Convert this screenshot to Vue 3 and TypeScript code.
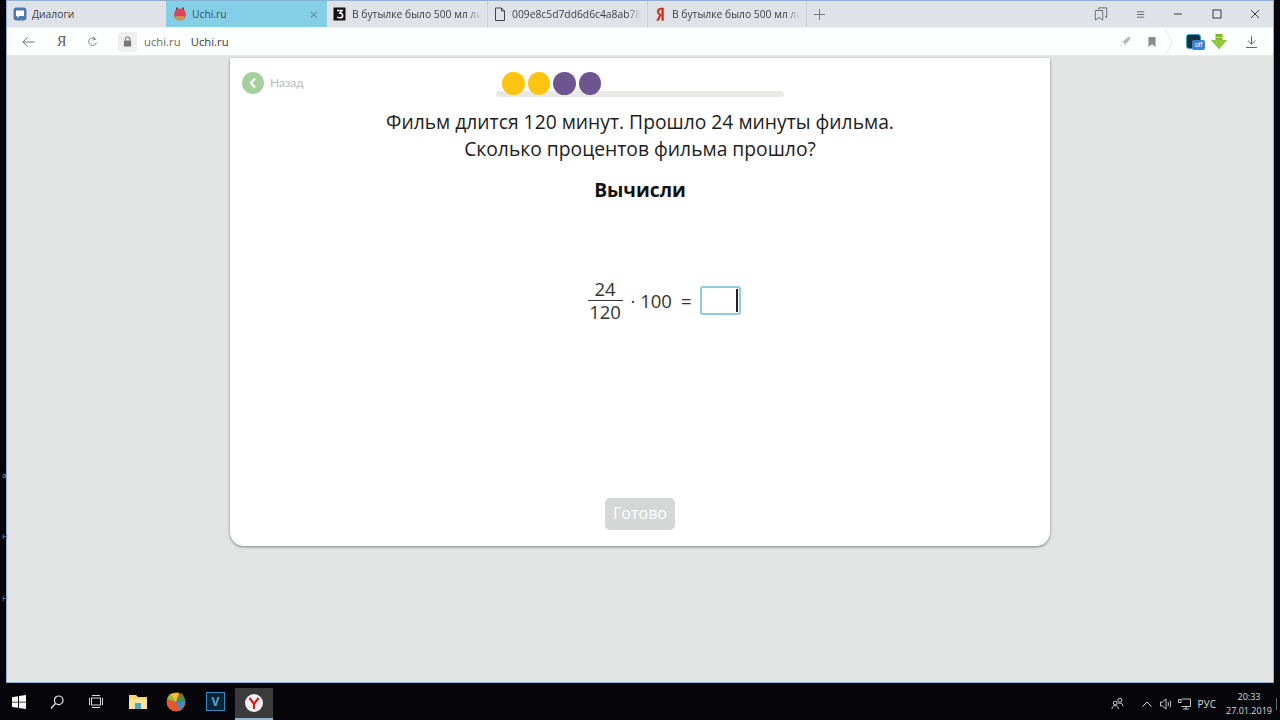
<script setup lang="ts">
interface Tab { title: string; icon: string; active?: boolean; fade?: boolean }
const tabs: Tab[] = [
  { title: 'Диалоги', icon: 'vk' },
  { title: 'Uchi.ru', icon: 'uchi', active: true },
  { title: 'В бутылке было 500 мл ли', icon: 'three', fade: true },
  { title: '009e8c5d7dd6d6c4a8ab787', icon: 'doc', fade: true },
  { title: 'В бутылке было 500 мл ли', icon: 'ya', fade: true },
]
const dots = ['#ffc312', '#ffc312', '#6d5590', '#6d5590']
</script>

<template>
  <div class="screen">
    <div class="window">
      <div class="tabbar">
        <div v-for="t in tabs" :key="t.icon" class="tab" :class="{ active: t.active }">
          <svg v-if="t.icon === 'vk'" class="favicon" viewBox="0 0 14 14"><rect x="0.5" y="0.5" width="13" height="13" rx="3" fill="#4f79ab" /><path d="M3 3.500h8v5.500H6.500L4.500 11V9H3z" fill="#fff" /></svg>
          <svg v-else-if="t.icon === 'uchi'" class="favicon" viewBox="0 0 14 14"><rect x="3" y="0.5" width="2" height="3" fill="#6a4a55" /><rect x="9" y="0.5" width="2" height="3" fill="#6a4a55" /><circle cx="7" cy="7.500" r="6" fill="#d8465d" /><path d="M2 9h10l-2 4H4z" fill="#c9944f" /></svg>
          <svg v-else-if="t.icon === 'three'" class="favicon" viewBox="0 0 14 14"><rect x="0.5" y="0.5" width="12" height="13" fill="#111" /><path d="M4 3.500h5L7 6.200c2 0 2.600 1 2.600 2.200 0 1.600-1.200 2.400-2.700 2.400-1 0-2-.3-2.600-.8" fill="none" stroke="#fff" stroke-width="1.600" /></svg>
          <svg v-else-if="t.icon === 'doc'" class="favicon" viewBox="0 0 14 14"><path d="M2.500 1h6l3 3v9.500h-9z M8.500 1v3h3" fill="none" stroke="#444" stroke-width="1" /></svg>
          <svg v-else class="favicon" viewBox="0 0 14 14"><path d="M10.500 13.500V1H8C5.500 1 4.200 2.400 4.200 4.600c0 1.800.8 2.800 2.200 3.600L3.600 13.500h1.900l2.600-5h.7v5zM8.800 7.200H8.200C6.800 7.200 6 6.200 6 4.600S6.800 2.400 8.200 2.400h.6z" fill="#cf2a1e" stroke="#cf2a1e" stroke-width="0.5" /></svg>
          <span class="tab-title" :class="{ fade: t.fade }">{{ t.title }}</span>
          <span v-if="t.active" class="tab-close">×</span>
        </div>
        <svg class="newtab" viewBox="0 0 12 12"><path d="M6 0v12M0 6h12" stroke="#6b7177" stroke-width="1" /></svg>
        <div class="winctl">
          <svg class="ctl" viewBox="0 0 16 16"><path d="M5.500 3V1h9v11l-2-1.500M1.500 4h8.500v11l-4.200-3-4.300 3z" fill="none" stroke="#5c6268" stroke-width="1" /></svg>
          <svg class="ctl menu" viewBox="0 0 10 10"><path d="M1 2h8M1 5h8M1 8h8" stroke="#5c6268" stroke-width="1" /></svg>
          <svg class="ctl min" viewBox="0 0 10 10"><path d="M1 5h8" stroke="#3a3e42" stroke-width="1" /></svg>
          <svg class="ctl max" viewBox="0 0 10 10"><rect x="1" y="1" width="8" height="8" fill="none" stroke="#3a3e42" stroke-width="1" /></svg>
          <svg class="ctl close" viewBox="0 0 10 10"><path d="M1 1l8 8M9 1l-8 8" stroke="#3a3e42" stroke-width="1" /></svg>
        </div>
      </div>

      <div class="toolbar">
        <svg class="tool back" viewBox="0 0 14 12"><path d="M13.500 6H1M6 1L1 6l5 5" fill="none" stroke="#666" stroke-width="1" /></svg>
        <span class="ya-btn">Я</span>
        <svg class="tool reload" viewBox="0 0 12 12"><path d="M9.800 4.200A4.200 4.200 0 1 0 10.200 7M7 .8l1.800 2.700-2.800 1" fill="none" stroke="#777" stroke-width="1" /></svg>
        <div class="urlbox">
          <span class="lock-box">
            <svg class="lock" viewBox="0 0 10 12"><path d="M2.500 5V3.500a2.500 2.500 0 0 1 5 0V5" fill="none" stroke="#777" stroke-width="1.200" /><rect x="1" y="5" width="8" height="6.500" rx="0.800" fill="#777" /></svg>
          </span>
          <span class="domain">uchi.ru</span>
          <span class="pagename">Uchi.ru</span>
          <svg class="tool rocket" viewBox="0 0 12 12"><path d="M11 1C7.500 1.500 5 4 3.800 7l1.500 1.500C8 7 10.500 4.500 11 1zM1 11l2-1M3.500 6l-2 .5M6 8.500 5.500 10.500" fill="#b5b8ba" stroke="#b5b8ba" stroke-width="0.800" /></svg>
          <svg class="tool bookmark" viewBox="0 0 9 11"><path d="M0.500 0h8v11L4.500 8l-4 3z" fill="#8a8d90" /></svg>
        </div>
        <svg class="url-end" viewBox="0 0 10 30"><path d="M0 0l8 15-8 15" fill="#fff" stroke="#e6e8ea" stroke-width="1" /></svg>
        <div class="ext">
          <span class="ext-black"></span>
          <span class="ext-off">off</span>
        </div>
        <svg class="tool arrow-ext" viewBox="0 0 16 15"><path d="M4.500 0h7v3h-7zM4.500 3.500h7v2.500H16L8 15 0 6h4.500z" fill="#7cb82c" /><path d="M0 6h16L8 15z" fill="#92c83e" /></svg>
        <svg class="tool dl" viewBox="0 0 11 12"><path d="M5.500 0v8M1.800 4.500l3.700 3.700 3.700-3.700M0 11.500h11" fill="none" stroke="#666" stroke-width="1" /></svg>
      </div>

      <div class="page">
        <div class="card">
          <div class="card-head">
            <div class="back-link">
              <span class="back-circle">
                <svg viewBox="0 0 10 12"><path d="M7 1.500 2.800 6 7 10.500" fill="none" stroke="#fff" stroke-width="2.200" /></svg>
              </span>
              <span class="back-text">Назад</span>
            </div>
            <div class="progress">
              <div class="dots">
                <span v-for="(c, i) in dots" :key="i" class="dot" :style="{ background: c }"></span>
              </div>
            </div>
          </div>
          <p class="question">Фильм длится 120 минут. Прошло 24 минуты фильма.<br />Сколько процентов фильма прошло?</p>
          <p class="task">Вычисли</p>
          <div class="expr">
            <div class="frac"><span>24</span><span class="den">120</span></div>
            <span class="times">· 100</span>
            <span class="eq">=</span>
            <div class="answer"><span class="caret"></span></div>
          </div>
          <button class="done" type="button">Готово</button>
        </div>
      </div>
    </div>

    <div class="edge-marks"><span>a</span><span>Н</span><span>Н</span></div>

    <div class="taskbar">
      <svg class="tb start" viewBox="0 0 14 14"><path d="M0 2.200 6 1.300V6.700H0zM7 1.100 14 0V6.700H7zM0 7.500h6v5.300l-6-.9zM7 7.500h7V14l-7-1z" fill="#fff" /></svg>
      <svg class="tb search" viewBox="0 0 14 14"><circle cx="8.700" cy="5.300" r="4.300" fill="none" stroke="#e8e8e8" stroke-width="1.200" /><path d="M5.500 8.500 1 13.500" stroke="#e8e8e8" stroke-width="1.200" /></svg>
      <svg class="tb tasks" viewBox="0 0 14 13"><path d="M3 .5h8M3 12.500h8" stroke="#ddd" stroke-width="1" /><rect x="2.500" y="3" width="9" height="7" fill="none" stroke="#ddd" stroke-width="1" /><path d="M.5 3v7M13.500 3v7" stroke="#ddd" stroke-width="1" /></svg>
      <svg class="tb folder" viewBox="0 0 18 15"><path d="M0 1h7l2 2h9v12H0z" fill="#f5d577" /><rect x="0" y="5" width="18" height="10" fill="#f9e39b" /><rect x="6" y="9" width="6" height="6" fill="#4fa8c0" /></svg>
      <svg class="tb ball" viewBox="0 0 20 20"><circle cx="10" cy="10" r="9.500" fill="#e4572e" /><path d="M10 10 16 .5 19.500 10z" fill="#3e8e5a" /><path d="M10 10 19.500 10 14 19z" fill="#3a8ec4" /><path d="M10 10 4 2 13 .5z" fill="#f2c230" /><path d="M10 10 1 7l3-5z" fill="#8fbf3a" /></svg>
      <div class="tb v-box">V</div>
      <div class="tb yandex">
        <svg viewBox="0 0 18 18"><circle cx="9" cy="9" r="9" fill="#f5f0f0" /><path d="M4.500 4 9 10l4.500-6M9 10v5" fill="none" stroke="#d32027" stroke-width="2.200" /></svg>
      </div>
      <div class="tray">
        <svg class="tr people" viewBox="0 0 14 14"><circle cx="9.500" cy="3.500" r="2.200" fill="none" stroke="#ddd" /><circle cx="4.500" cy="6.500" r="2" fill="none" stroke="#ddd" /><path d="M1 13c.3-2.500 1.500-3.800 3.500-3.800S7.700 10.500 8 13M7 7.500c.8-.7 1.500-1 2.500-1 2 0 3.200 1.300 3.500 3.500" fill="none" stroke="#ddd" /></svg>
        <svg class="tr chev" viewBox="0 0 10 6"><path d="M.5 5.500 5 1l4.500 4.500" fill="none" stroke="#ddd" stroke-width="1" /></svg>
        <svg class="tr vol" viewBox="0 0 13 12"><path d="M.5 4h2L6 1v10L2.500 8h-2zM8 4c.6 1.200.6 2.800 0 4M10 2.500c1 2 1 5 0 7" fill="none" stroke="#ddd" stroke-width="0.900" /></svg>
        <svg class="tr net" viewBox="0 0 13 12"><path d="M3 1.500H.5v3H3zM3.500 1h9v7.500h-9M8 8.500v2.500M5 11h6" fill="none" stroke="#ddd" stroke-width="0.900" /></svg>
        <span class="lang">РУС</span>
        <div class="clock"><span>20:33</span><span>27.01.2019</span></div>
        <span class="notify-line"></span>
      </div>
    </div>
  </div>
</template>

<style>
html, body { margin: 0; background: #03030a; }
</style>

<style scoped>
.screen {
  position: relative;
  width: 1280px;
  height: 720px;
  overflow: hidden;
  background: #050509;
  font-family: "Open Sans", "Noto Sans", sans-serif;
  display: flex;
  flex-direction: column;
}
.window {
  margin: 0 6px;
  height: 683px;
  box-sizing: border-box;
  border: 1px solid #8fb0d6;
  display: flex;
  flex-direction: column;
  background: #e3e5e5;
}
.tabbar {
  height: 26px;
  background: #dfe3e8;
  display: flex;
  align-items: center;
  flex: none;
}
.tab {
  width: 160px;
  height: 26px;
  box-sizing: border-box;
  padding-left: 6px;
  display: flex;
  align-items: center;
  gap: 5px;
  color: #3b3f44;
  flex: none;
}
.tab:nth-child(1) { width: 159px; }
.tab:nth-child(4), .tab:nth-child(5) { border-left: 1px solid #cbd0d5; padding-left: 5px; }
.tab:nth-child(5) { border-right: 1px solid #cbd0d5; }
.tab.active { background: #85cfe6; width: 161px; padding-left: 7px; color: #34505e; }
.favicon { width: 14px; height: 14px; flex: none; }
.tab-title {
  white-space: nowrap;
  overflow: hidden;
  flex: 1;
  min-width: 0;
  margin-right: 1px;
  font-size: 10.300px;
}
.tab-title.fade {
  -webkit-mask-image: linear-gradient(to right, #000 86%, transparent 96%);
  mask-image: linear-gradient(to right, #000 86%, transparent 96%);
}
.tab-close { font-size: 15px; color: #5d8a9c; margin-right: 9px; line-height: 1; }
.newtab { width: 11px; height: 11px; margin-left: 7px; flex: none; }
.winctl { margin-left: auto; display: flex; align-items: center; }
.ctl { flex: none; display: block; }
.winctl .ctl { width: 14px; height: 14px; margin-right: 27.500px; }
.winctl .menu { width: 9px; height: 9px; margin-right: 28.500px; }
.winctl .min { width: 10px; height: 10px; margin-right: 29px; }
.winctl .max { width: 10px; height: 10px; margin-right: 28px; }
.winctl .close { width: 10px; height: 10px; margin-right: 13px; }

.toolbar {
  height: 29px;
  flex: none;
  background: #fdfefe;
  display: flex;
  align-items: center;
  box-sizing: border-box;
  padding-left: 15px;
  border-bottom: 1px solid #e9ebeb;
  border-top: 1px solid #f0f2f4;
}
.tool { display: block; flex: none; }
.back { width: 13px; height: 12px; }
.ya-btn { width: 10px; margin-left: 22px; font-size: 14px; color: #555; font-family: "Liberation Serif", serif; line-height: 1; }
.reload { width: 11px; height: 11px; margin-left: 20px; }
.urlbox {
  margin-left: 20px;
  display: flex;
  align-items: center;
  flex: 1;
  height: 100%;
  font-size: 11.300px;
}
.lock-box {
  width: 19px;
  height: 20px;
  background: #efefef;
  border-radius: 3px;
  display: flex;
  align-items: center;
  justify-content: center;
  flex: none;
}
.lock { width: 9px; height: 11px; }
.domain { margin-left: 7px; color: #6f6a5e; }
.pagename { margin-left: 10px; color: #34383c; }
.rocket { width: 11px; height: 11px; margin-left: auto; }
.bookmark { width: 8px; height: 10px; margin-left: 17px; margin-right: 9px; }
.url-end { width: 9px; height: 28px; flex: none; }
.ext { width: 19px; height: 16px; margin-left: 12px; position: relative; flex: none; }
.ext-black { position: absolute; left: 0; top: 0; width: 15px; height: 15px; border-radius: 3px; background: #173040; border: 1px solid #39a5c8; box-sizing: border-box; }
.ext-off {
  position: absolute; left: 6px; top: 6px; width: 13px; height: 10px;
  background: #3f7fd0; border-radius: 2px; color: #fff; font-size: 7px; line-height: 10px; text-align: center;
  font-family: "Liberation Sans", sans-serif;
}
.arrow-ext { width: 16px; height: 15px; margin-left: 6px; }
.dl { width: 11px; height: 12px; margin-left: 19px; margin-right: 16px; }

.page {
  flex: 1;
  min-height: 0;
  background: #e3e5e5;
  padding-top: 2px;
  display: flex;
  justify-content: center;
}
.card {
  width: 820px;
  height: 488px;
  background: #fff;
  border-radius: 0 0 14px 14px;
  box-shadow: 0 1px 3px rgba(0, 0, 0, 0.45);
  display: flex;
  flex-direction: column;
  align-items: center;
  box-sizing: border-box;
  padding-top: 14px;
}
.card-head {
  width: 100%;
  height: 26px;
  position: relative;
  flex: none;
  box-sizing: border-box;
  padding-left: 12px;
  display: flex;
  align-items: flex-start;
}
.back-link { display: flex; align-items: center; gap: 6px; }
.back-circle {
  width: 22px; height: 22px; border-radius: 50%;
  background: #a4cf9f;
  display: flex; align-items: center; justify-content: center;
}
.back-circle svg { width: 10px; height: 12px; }
.back-text { font-family: Lato, sans-serif; font-size: 12px; color: #b9bbbb; padding-bottom: 2px; }
.progress {
  position: absolute;
  left: 266px;
  top: 19px;
  width: 288px;
  height: 6px;
  border-radius: 3px;
  background: #e7e9e2;
}
.dots {
  position: absolute;
  left: 6px;
  top: -19px;
  display: flex;
  gap: 3px;
}
.dot { width: 22.500px; height: 23px; border-radius: 50%; }
.question {
  margin: 10px 0 0;
  font-size: 19.300px;
  line-height: 27px;
  color: #1d1d1d;
  text-align: center;
}
.task {
  margin: 14px 0 0;
  font-size: 19.200px;
  line-height: 27px;
  font-weight: 700;
  color: #111;
}
.expr {
  margin-top: 74px;
  margin-left: 49px;
  height: 46px;
  display: flex;
  align-items: center;
  font-size: 18.500px;
  color: #333;
}
.frac {
  display: flex;
  flex-direction: column;
  align-items: center;
  width: 35px;
  line-height: 22px;
}
.frac .den { border-top: 1.500px solid #333; width: 100%; text-align: center; }
.times { margin-left: 8px; }
.eq { margin-left: 9px; }
.answer {
  margin-left: 9px;
  width: 41px;
  height: 29px;
  box-sizing: border-box;
  border: 2px solid #8ccbe0;
  border-radius: 3px;
  display: flex;
  justify-content: flex-end;
  align-items: center;
  padding-right: 1px;
}
.caret { width: 2px; height: 23px; background: #222; }
.done {
  margin-top: auto;
  margin-bottom: 16px;
  width: 70px;
  height: 32px;
  border: 0;
  border-radius: 5px;
  background: #d5d6d6;
  color: #fff;
  font-family: "Open Sans", sans-serif;
  font-size: 16px;
  padding: 0 0 2px;
}
.edge-marks { display: contents; }
.edge-marks span {
  position: absolute;
  left: 2px;
  font-size: 8px;
  color: #99a;
  line-height: 10px;
}
.edge-marks span:nth-child(1) { top: 470px; }
.edge-marks span:nth-child(2) { top: 531px; }
.edge-marks span:nth-child(3) { top: 593px; }

.taskbar {
  flex: 1;
  display: flex;
  align-items: center;
  color: #ddd;
  position: relative;
}
.tb { display: block; flex: none; }
.start { width: 14px; height: 14px; margin-left: 12px; }
.search { width: 14px; height: 14px; margin-left: 24px; }
.tasks { width: 14px; height: 13px; margin-left: 25px; }
.folder { width: 18px; height: 15px; margin-left: 26px; }
.ball { width: 20px; height: 20px; margin-left: 19px; }
.v-box {
  width: 19px; height: 19px; margin-left: 20px;
  border: 1px solid #2f8fc0;
  box-sizing: border-box;
  background: #0c2335;
  color: #4ea7d8;
  font: 700 12px/17px "Open Sans", sans-serif;
  text-align: center;
}
.yandex {
  width: 38px;
  height: 32px;
  margin-left: 10px;
  margin-top: 5px;
  background: #3b3b3b;
  border-bottom: 2px solid #8fb6dd;
  box-sizing: border-box;
  display: flex;
  align-items: center;
  justify-content: center;
}
.yandex svg { width: 18px; height: 18px; }
.tray { margin-left: auto; display: flex; align-items: center; height: 100%; padding-top: 4px; box-sizing: border-box; }
.tr { display: block; flex: none; }
.people { width: 13px; height: 13px; }
.chev { width: 10px; height: 6px; margin-left: 18px; }
.vol { width: 13px; height: 12px; margin-left: 8px; }
.net { width: 13px; height: 12px; margin-left: 5px; }
.lang { font-size: 10px; margin-left: 7px; color: #ddd; }
.clock {
  display: flex;
  flex-direction: column;
  align-items: center;
  font-size: 9px;
  line-height: 14px;
  margin-left: 11px;
  width: 44px;
}
.notify-line { width: 1px; height: 12px; background: #666; margin-left: 5px; margin-right: 3px; }
</style>
